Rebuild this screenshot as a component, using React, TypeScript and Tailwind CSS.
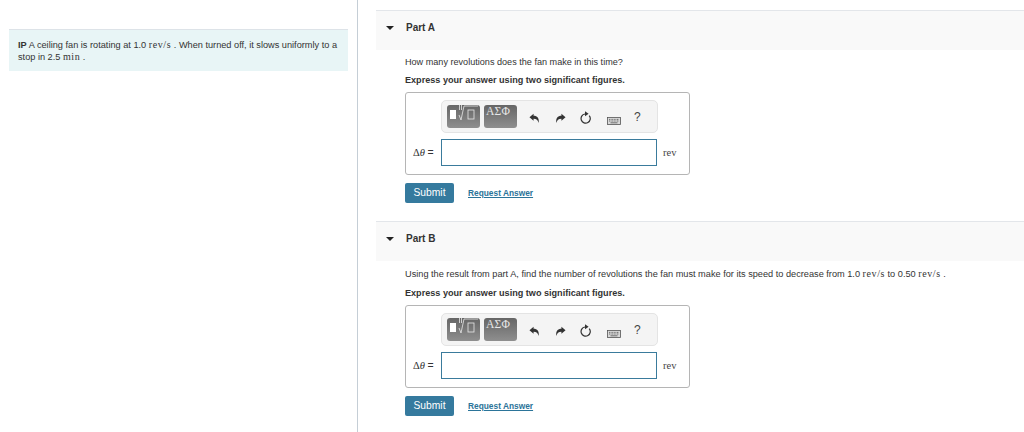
const mathFont = "font-['Liberation_Serif',serif]";

function Undo({ flip }: { flip?: boolean }) {
  return (
    <svg width="11" height="11" viewBox="0 0 12 12" className={flip ? '-scale-x-100' : ''}>
      <path d="M0.5 4.5 L5 0.8 V3 C9 3 11.2 5.6 10.6 11 C9.8 7.8 8.2 6.2 5 6.2 V8.4 Z" fill="#333" />
    </svg>
  );
}

function Toolbar() {
  return (
    <div className="ml-[35px] flex h-[33px] w-[217px] items-center rounded-[5px] border border-[#e4e4e4] bg-[#f4f4f4] pl-[5px]">
      <div className="relative h-[23px] w-[33px] rounded-[3px] bg-gradient-to-b from-[#666666] to-[#8f8f8f]">
        <div className="absolute left-[3px] top-[5px] h-[9px] w-[6px] bg-white" />
        <svg width="22" height="18" viewBox="0 0 22 18" className="absolute left-[11px] top-0" fill="none" stroke="#e8e8e8" strokeWidth="0.8">
          <path d="M1 10 L3 15 L6 1 H20" />
          <path d="M1.5 0 V5 M3.5 0 V5" />
          <rect x="10" y="5" width="6" height="9" />
        </svg>
      </div>
      <div className={`${mathFont} ml-1 h-[23px] w-[33px] rounded-[3px] bg-gradient-to-b from-[#666666] to-[#8f8f8f] pl-[2px] text-[11.5px] leading-[13px] tracking-[0.3px] text-[#e8e8e8]`}>
        ΑΣΦ
      </div>
      <div className="ml-[12px] flex w-[11px] translate-y-[2px] items-center">
        <Undo />
      </div>
      <div className="ml-[15px] flex w-[11px] translate-y-[2px] items-center">
        <Undo flip />
      </div>
      <svg width="12" height="13" viewBox="0 0 12 13" className="ml-[14px] translate-y-[1px]" fill="none">
        <path d="M5 3 A4.6 4.6 0 1 0 9.2 4.6" stroke="#333" strokeWidth="1.2" />
        <path d="M5 0.3 L8.6 2.8 L5 5.3 Z" fill="#333" />
      </svg>
      <svg width="14" height="8" viewBox="0 0 14 8" className="ml-[15px] translate-y-[4px]">
        <rect x="0.5" y="0.5" width="13" height="7" fill="#d8d8d8" stroke="#555" strokeWidth="0.8" />
        <path d="M2 2.4 H12 M2 4 H12" stroke="#555" strokeWidth="0.8" strokeDasharray="1 0.6" />
        <path d="M3.5 5.8 H10.5" stroke="#555" strokeWidth="0.8" />
      </svg>
      <span className="ml-[13px] text-[12px] text-[#444]">?</span>
    </div>
  );
}

function Part({ label, children }: { label: string; children: React.ReactNode }) {
  return (
    <section>
      <div className="flex h-[40px] items-center border-t border-[#e3e6ea] bg-[#f9f9f9] pb-[6px] pl-[10px]">
        <span className="h-0 w-0 border-x-[4px] border-t-[4px] border-x-transparent border-t-[#222]" />
        <span className="ml-[12px] text-[10px] font-bold text-[#333]">{label}</span>
      </div>
      <div className="pl-[29px]">
        {children}
        <p className="mt-[4px] text-[9.1px] leading-[14px] font-bold text-[#333]">
          Express your answer using two significant figures.
        </p>
        <div className="mt-[5px] h-[83px] w-[285px] rounded-[3px] border border-[#b5b5b5] bg-white pt-[7px]">
          <Toolbar />
          <div className="mt-[6px] flex items-center">
            <span className={`${mathFont} w-[35px] pl-[7px] text-[10.5px] text-[#333]`}>
              Δ<i>θ</i> <span className="font-['Liberation_Sans',sans-serif]">=</span>
            </span>
            <div className="h-[27px] w-[216px] border border-[#3a7b9c] bg-white" />
            <span className={`${mathFont} ml-[6px] text-[10.5px] text-[#444]`}>rev</span>
          </div>
        </div>
        <div className="mt-[8px] flex items-center">
          <button className="h-[20px] w-[49px] rounded-[2px] bg-[#357a9e] text-[10.3px] text-white">Submit</button>
          <a className="ml-[14px] text-[8.35px] font-bold text-[#2b7499] underline">Request Answer</a>
        </div>
      </div>
    </section>
  );
}

export default function App() {
  const m = `${mathFont} text-[10px] tracking-[0.6px]`;
  return (
    <div className="flex h-[432px] w-[1024px] overflow-hidden bg-white font-['Liberation_Sans',sans-serif] text-[#333]">
      <aside className="h-full w-[358px] shrink-0 border-r border-[#c5ced6] pt-[29px] pl-[9px]">
        <div className="h-[42px] w-[339px] border-t border-[#dde3e8] bg-[#e8f5f6] px-[9px] pt-[9px] text-[9.2px] leading-[12px]">
          <div className="whitespace-nowrap">
            <b>IP</b> A ceiling fan is rotating at 1.0 <span className={m}>rev/s</span> . When turned off, it slows uniformly to a
          </div>
          <div className="whitespace-nowrap">
            stop in 2.5 <span className={m}>min</span> .
          </div>
        </div>
      </aside>
      <main className="min-w-0 flex-1 pt-[10px] pl-[18px]">
        <Part label="Part A">
          <p className="mt-[5px] text-[9.1px] leading-[14px]">How many revolutions does the fan make in this time?</p>
        </Part>
        <div className="h-[18px]" />
        <Part label="Part B">
          <p className="mt-[5px] text-[9.2px] leading-[15px]">
            Using the result from part A, find the number of revolutions the fan must make for its speed to decrease from 1.0 <span className={m}>rev/s</span> to 0.50 <span className={m}>rev/s</span> .
          </p>
        </Part>
      </main>
    </div>
  );
}
